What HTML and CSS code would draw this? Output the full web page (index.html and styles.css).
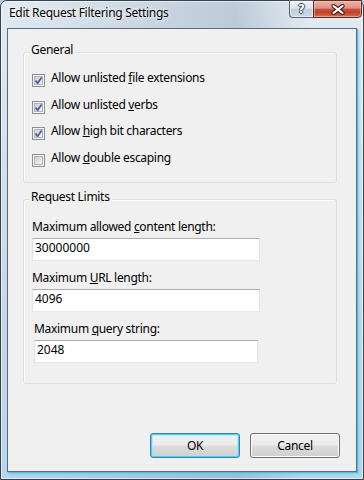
FILE: index.html
```html
<!DOCTYPE html>
<html>
<head>
<meta charset="utf-8">
<link rel="stylesheet" href="styles.css">
</head>
<body>
<div class="window">
  <div class="titlebar">
    <span class="title">Edit Request Filtering Settings</span>
    <div class="caption-buttons">
      <span class="cap-help">?</span>
      <span class="cap-close">
        <svg width="14" height="11" viewBox="0 0 14 11">
          <path d="M2.5 2 L11.5 9 M11.5 2 L2.5 9" stroke="#3b2520" stroke-width="4.2" stroke-linecap="round" fill="none"/>
          <path d="M2.5 2 L11.5 9 M11.5 2 L2.5 9" stroke="#ffffff" stroke-width="2.2" stroke-linecap="round" fill="none"/>
        </svg>
      </span>
    </div>
  </div>
  <div class="client">
    <section class="group general">
      <div class="group-title">General</div>
      <div class="checks">
        <label class="check">
          <svg class="box" width="13" height="13" viewBox="0 0 13 13"><use href="#cb-on"/></svg>
          <span>Allow unlisted <u>f</u>ile extensions</span>
        </label>
        <label class="check">
          <svg class="box" width="13" height="13" viewBox="0 0 13 13"><use href="#cb-on"/></svg>
          <span>Allow unlisted <u>v</u>erbs</span>
        </label>
        <label class="check">
          <svg class="box" width="13" height="13" viewBox="0 0 13 13"><use href="#cb-on"/></svg>
          <span>Allow <u>h</u>igh bit characters</span>
        </label>
        <label class="check">
          <svg class="box" width="13" height="13" viewBox="0 0 13 13"><use href="#cb-off"/></svg>
          <span>Allow <u>d</u>ouble escaping</span>
        </label>
      </div>
    </section>
    <section class="group limits">
      <div class="group-title">Request Limits</div>
      <div class="fields">
        <div class="field">
          <div class="field-label">Maximum allowed <u>c</u>ontent length:</div>
          <div class="textbox">30000000</div>
        </div>
        <div class="field">
          <div class="field-label">Maximum <u>U</u>RL length:</div>
          <div class="textbox">4096</div>
        </div>
        <div class="field field-shift">
          <div class="field-label">Maximum <u>q</u>uery string:</div>
          <div class="textbox">2048</div>
        </div>
      </div>
    </section>
    <div class="buttons">
      <button class="btn btn-default">OK</button>
      <button class="btn">Cancel</button>
    </div>
  </div>
</div>
<svg width="0" height="0" class="defs">
  <defs>
    <linearGradient id="cbfill" x1="0" y1="0" x2="1" y2="1">
      <stop offset="0" stop-color="#c9ccd1"/>
      <stop offset="1" stop-color="#f7f7f7"/>
    </linearGradient>
    <symbol id="cb-off" viewBox="0 0 13 13">
      <rect x="0.5" y="0.5" width="12" height="12" fill="#f5f5f5" stroke="#8e8f8f"/>
      <rect x="2.5" y="2.5" width="8" height="8" fill="url(#cbfill)" stroke="#aeb3b9"/>
    </symbol>
    <symbol id="cb-on" viewBox="0 0 13 13">
      <rect x="0.5" y="0.5" width="12" height="12" fill="#f5f5f5" stroke="#8e8f8f"/>
      <rect x="2.5" y="2.5" width="8" height="8" fill="url(#cbfill)" stroke="#aeb3b9"/>
      <path d="M3.6 6.4 L5.6 9.2 L9.6 3.4" stroke="#4a5d98" stroke-width="1.7" fill="none" stroke-linejoin="round"/>
    </symbol>
  </defs>
</svg>
</body>
</html>
```
FILE: styles.css
```css
* { box-sizing: border-box; }
html, body { margin: 0; padding: 0; }
body {
  width: 364px;
  height: 480px;
  overflow: hidden;
  font-family: "Noto Sans", "Open Sans", sans-serif;
  font-size: 12px;
  line-height: 16px;
  color: #000;
  background: #b9cde0;
}
.defs { position: absolute; }

.window {
  width: 364px;
  height: 480px;
  border: 1px solid #36414c;
  border-radius: 7px 7px 0 0;
  background:
    linear-gradient(90deg, rgba(255,255,255,0) 0%, rgba(120,145,170,0.25) 45%, rgba(120,145,170,0.35) 65%, rgba(255,255,255,0) 85%),
    linear-gradient(180deg, #e3ebf2 0%, #d5e1ec 30%, #c3d7e9 70%, #b6d6ec 100%);
  box-shadow: inset 0 0 0 1px rgba(255,255,255,0.55);
  display: flex;
  flex-direction: column;
}

.titlebar {
  height: 27px;
  display: flex;
  justify-content: space-between;
  align-items: flex-start;
}
.title {
  margin: 4px 0 0 8px;
  letter-spacing: -0.3px;
  text-shadow: 0 0 6px rgba(255,255,255,0.95), 0 0 2px rgba(255,255,255,0.9);
}
.caption-buttons {
  display: flex;
  margin: -1px 1px 0 0;
}
.cap-help {
  width: 24px;
  height: 18px;
  border: 1px solid #5a6470;
  border-right: none;
  border-radius: 0 0 0 4px;
  background: linear-gradient(180deg, #eef3f7 0%, #dde6ee 45%, #c1cfdb 50%, #cbd8e3 100%);
  box-shadow: inset 0 0 0 1px rgba(255,255,255,0.5);
  color: #fff;
  font-family: "DejaVu Sans", sans-serif;
  font-weight: bold;
  font-size: 12px;
  line-height: 16px;
  text-align: center;
  text-shadow: 1px 0 #3e4751, -1px 0 #3e4751, 0 1px #3e4751, 0 -1px #3e4751;
}
.cap-close {
  width: 49px;
  height: 18px;
  border: 1px solid #5b2a22;
  border-radius: 0 0 4px 0;
  background: linear-gradient(180deg, #eab2a6 0%, #df9383 45%, #c8503b 50%, #c2412b 72%, #d6714f 100%);
  box-shadow: inset 0 0 0 1px rgba(255,220,210,0.45);
  display: flex;
  align-items: center;
  justify-content: center;
}

.client {
  margin: 0 6px;
  height: 444px;
  border: 1px solid #5f6b77;
  background: #f0f0f0;
  box-shadow: 1px 1px 0 0 #43c2ee, 2px 2px 2px 0 rgba(80,200,245,0.6);
  display: flex;
  flex-direction: column;
}

.group {
  width: 314px;
  margin-left: 15px;
  border: 1px solid #d5dfe5;
  border-radius: 3px;
  box-shadow: inset 1px 1px 0 #ffffff;
  padding-left: 8px;
}
.general { margin-top: 23px; height: 131px; }
.limits { margin-top: 16px; height: 185px; }

.group-title {
  width: fit-content;
  margin: -11px 0 0 -3px;
  padding: 0 2px;
  background: #f0f0f0;
  letter-spacing: -0.3px;
}

.checks { padding-top: 12px; }
.check {
  display: flex;
  align-items: flex-start;
  height: 26.5px;
  letter-spacing: -0.3px;
}
.check .box {
  flex: none;
  margin: 4px 6px 0 0;
}

.fields {
  padding-top: 14px;
  display: flex;
  flex-direction: column;
  gap: 9px;
}
.field-label {
  margin-bottom: 3px;
  letter-spacing: -0.3px;
}
.textbox {
  width: 228px;
  height: 23px;
  padding: 1px 2px;
  background: #fff;
  border: 1px solid #e2e3ea;
  border-top-color: #abadb3;
  border-bottom-color: #e3e9ef;
}
.field-shift { margin-left: 2px; }
.field-shift .textbox { width: 224px; }

.buttons {
  margin-top: 49px;
  padding-right: 16px;
  display: flex;
  justify-content: flex-end;
  gap: 10px;
}
.btn {
  width: 90px;
  height: 25px;
  padding: 0;
  font: inherit;
  letter-spacing: -0.3px;
  color: #000;
  border: 1px solid #707070;
  border-radius: 3px;
  background: linear-gradient(180deg, #f2f2f2 0%, #ebebeb 48%, #dddddd 52%, #cfcfcf 100%);
  box-shadow: inset 0 0 0 1px #fcfcfc;
}
.btn-default {
  border-color: #3c7fb1;
  box-shadow: inset 0 0 0 1px #48d1fb, inset 0 0 0 2px rgba(160,230,252,0.6);
}
```
